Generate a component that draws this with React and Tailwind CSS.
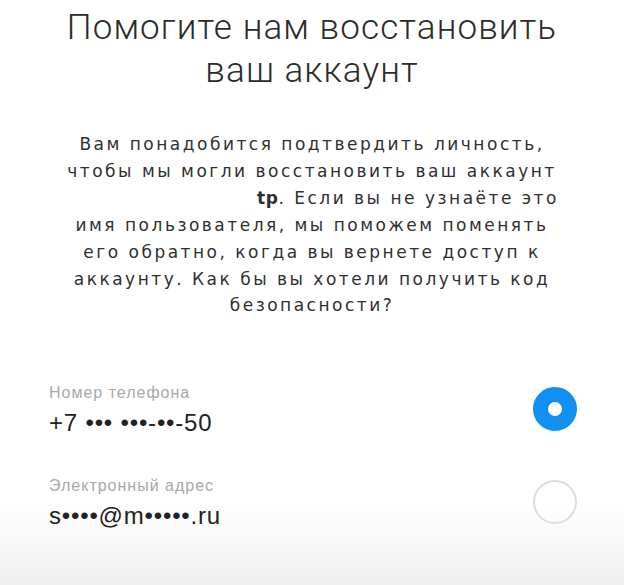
export default function App() {
  const options = [
    { label: 'Номер телефона', value: '+7 ••• •••-••-50', selected: true },
    { label: 'Электронный адрес', value: 's••••@m•••••.ru', selected: false },
  ];

  return (
    <div className="h-[585px] w-full overflow-hidden bg-[linear-gradient(to_bottom,#ffffff_505px,#efefef_585px)] text-[#262626]">
      {/* TITLE */}
      <h1 className="pt-[6px] text-center font-['Roboto',sans-serif] text-[35px] font-light leading-[43px] tracking-[1.1px] text-[#2b2b2b]">
        Помогите нам восстановить
        <br />
        ваш аккаунт
      </h1>

      {/* DESCRIPTION */}
      <p className="mt-[39px] text-center font-['DejaVu_Sans',sans-serif] text-[17px] leading-[26.9px] tracking-[2.5px] text-[#2f2f2f]">
        Вам понадобится подтвердить личность,
        <br />
        чтобы мы могли восстановить ваш аккаунт
        <br />
        <span className="inline-block w-[192px]" />
        <strong className="font-bold tracking-[0.5px]">tp</strong>. Если вы не узнаёте это
        <br />
        имя пользователя, мы поможем поменять
        <br />
        его обратно, когда вы вернете доступ к
        <br />
        аккаунту. Как бы вы хотели получить код
        <br />
        безопасности?
      </p>

      {/* OPTIONS */}
      <div className="mt-[60px] flex flex-col gap-[33px] pl-[49px] pr-[47px]">
        {options.map((o) => (
          <div key={o.label} className="flex items-center justify-between">
            <div className="flex flex-col">
              <span className="font-['Liberation_Sans',Arial,sans-serif] text-[16px] leading-[28px] tracking-[1px] text-[#a8a8a8]">
                {o.label}
              </span>
              <span className="font-['Liberation_Sans',Arial,sans-serif] text-[24px] leading-[32px] tracking-[0.8px] text-[#222]">
                {o.value}
              </span>
            </div>
            {o.selected ? (
              <span className="h-[44px] w-[44px] rounded-full border-[15px] border-[#1190f2] bg-white" />
            ) : (
              <span className="h-[44px] w-[44px] rounded-full border-2 border-[#dcdcdc]" />
            )}
          </div>
        ))}
      </div>
    </div>
  );
}
